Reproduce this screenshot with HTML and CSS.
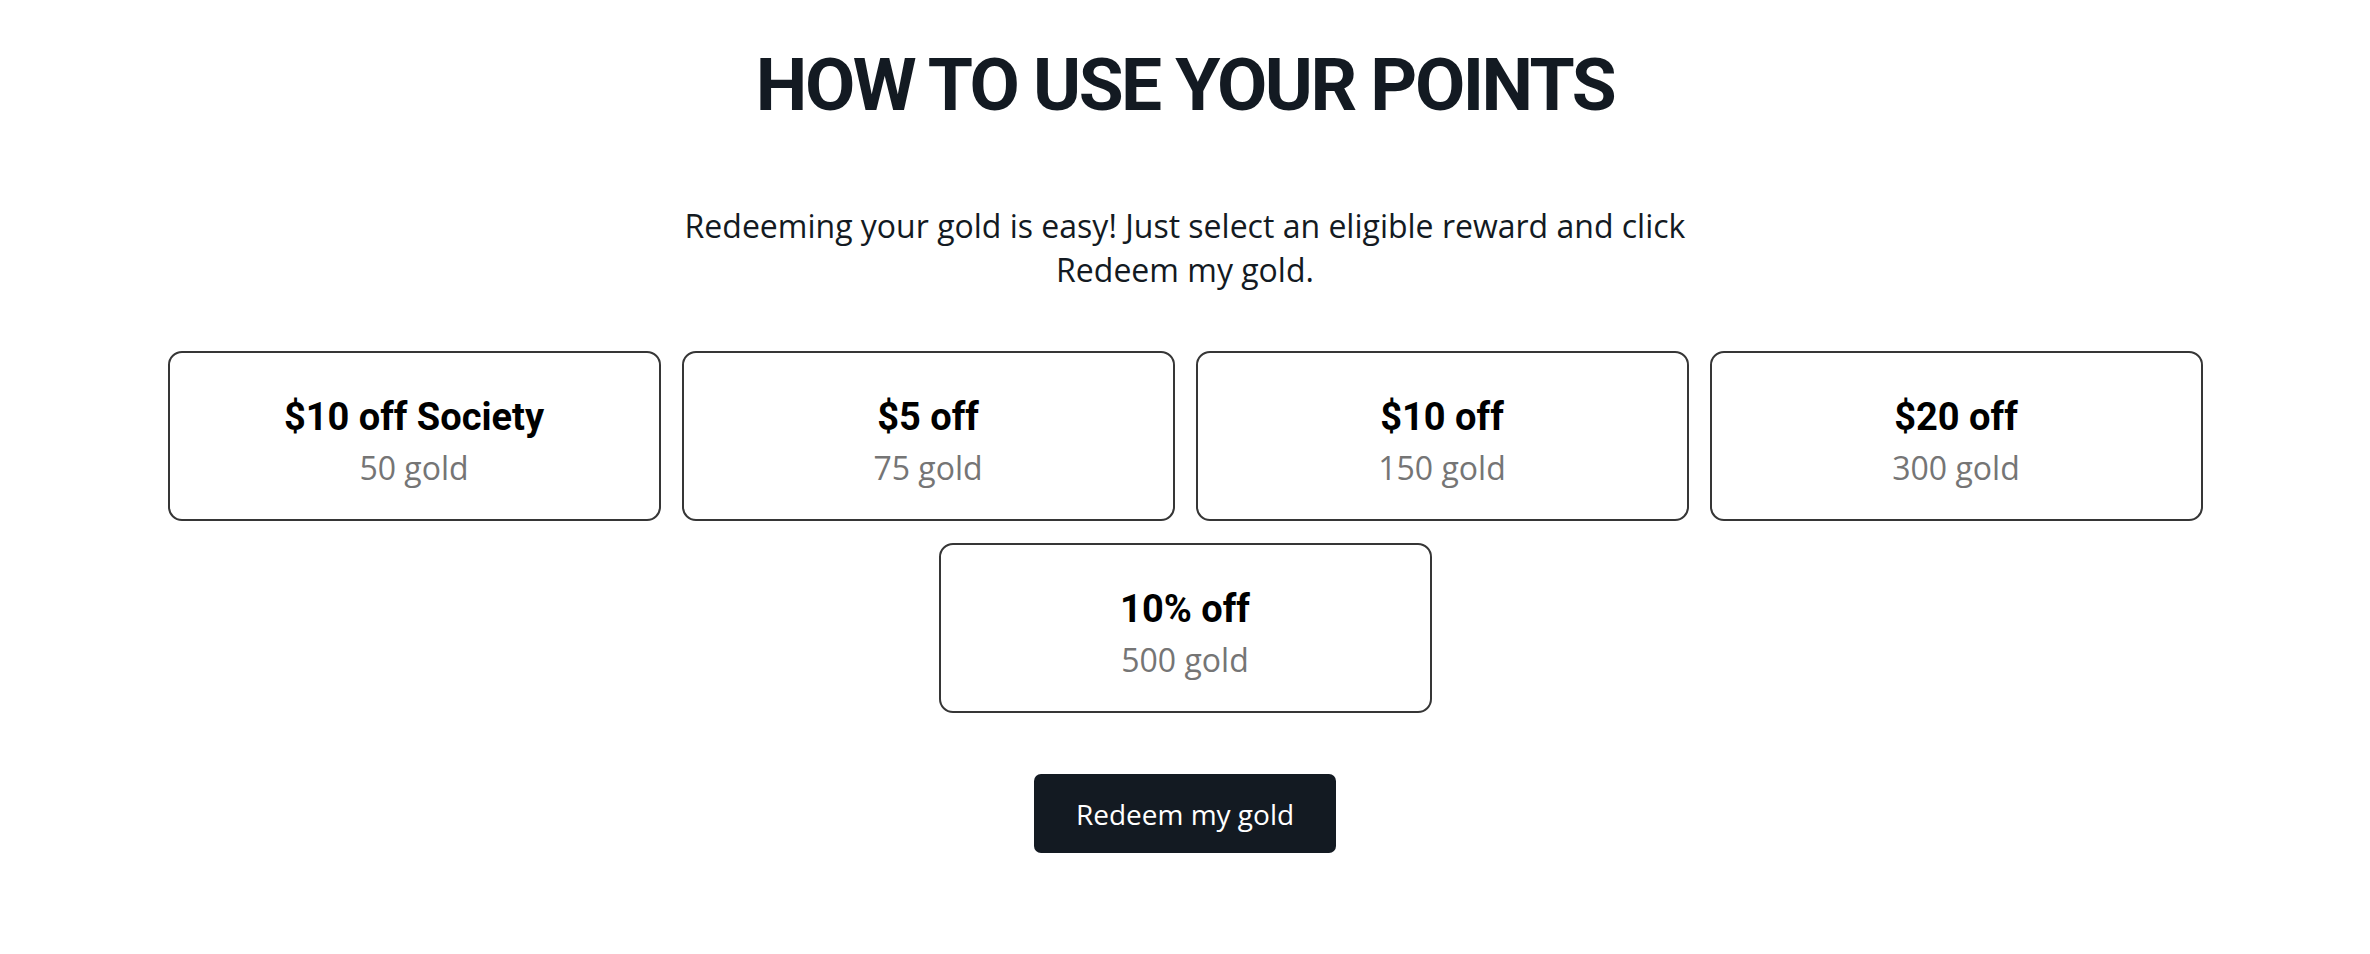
FILE: index.html
```html
<!DOCTYPE html>
<html lang="en">
<head>
<meta charset="utf-8">
<title>How to use your points</title>
<link rel="stylesheet" href="styles.css">
</head>
<body>
<main class="points">
  <h1 class="points-title">HOW TO USE YOUR POINTS</h1>
  <p class="points-intro">Redeeming your gold is easy! Just select an eligible reward and click Redeem my gold.</p>
  <div class="rewards">
    <div class="reward"><div class="reward-name">$10 off Society</div><div class="reward-cost">50 gold</div></div>
    <div class="reward"><div class="reward-name">$5 off</div><div class="reward-cost">75 gold</div></div>
    <div class="reward"><div class="reward-name">$10 off</div><div class="reward-cost">150 gold</div></div>
    <div class="reward"><div class="reward-name">$20 off</div><div class="reward-cost">300 gold</div></div>
    <div class="reward"><div class="reward-name">10% off</div><div class="reward-cost">500 gold</div></div>
  </div>
  <div class="actions">
    <button class="redeem-btn" type="button">Redeem my gold</button>
  </div>
</main>
</body>
</html>
```

FILE: styles.css
```css
html, body {
  margin: 0;
  padding: 0;
  background: #ffffff;
}

body {
  font-family: "Open Sans", "Noto Sans", sans-serif;
  color: #131a22;
}

.points {
  display: flex;
  flex-direction: column;
  align-items: center;
  padding-top: 50px;
}

.points-title {
  margin: 0;
  font-family: Roboto, "DejaVu Sans", sans-serif;
  font-weight: bold;
  font-size: 73px;
  line-height: 71px;
  letter-spacing: -2.5px;
  color: #131a22;
  text-align: center;
}

.points-intro {
  margin: 83px 0 0;
  max-width: 1080px;
  font-size: 32px;
  line-height: 44px;
  text-align: center;
  color: #131a22;
}

.rewards {
  margin-top: 59px;
  width: 2035px;
  display: flex;
  flex-wrap: wrap;
  justify-content: center;
  gap: 22px 21px;
}

.reward {
  box-sizing: border-box;
  flex: 0 0 493px;
  height: 170px;
  border: 2px solid #363636;
  border-radius: 14px;
  padding-top: 44px;
  display: flex;
  flex-direction: column;
  align-items: center;
}

.reward-name {
  font-family: Roboto, "DejaVu Sans", sans-serif;
  font-weight: bold;
  font-size: 38px;
  line-height: 40px;
  color: #000000;
}

.reward-cost {
  margin-top: 9px;
  font-size: 32px;
  line-height: 44px;
  color: #757575;
}

.actions {
  margin-top: 59px;
}

.redeem-btn {
  box-sizing: border-box;
  width: 302px;
  height: 79px;
  margin-top: 2px;
  border: 0;
  border-radius: 7px;
  background: #131a22;
  color: #ffffff;
  font-family: "Open Sans", "Noto Sans", sans-serif;
  font-size: 28px;
  cursor: pointer;
}
```
